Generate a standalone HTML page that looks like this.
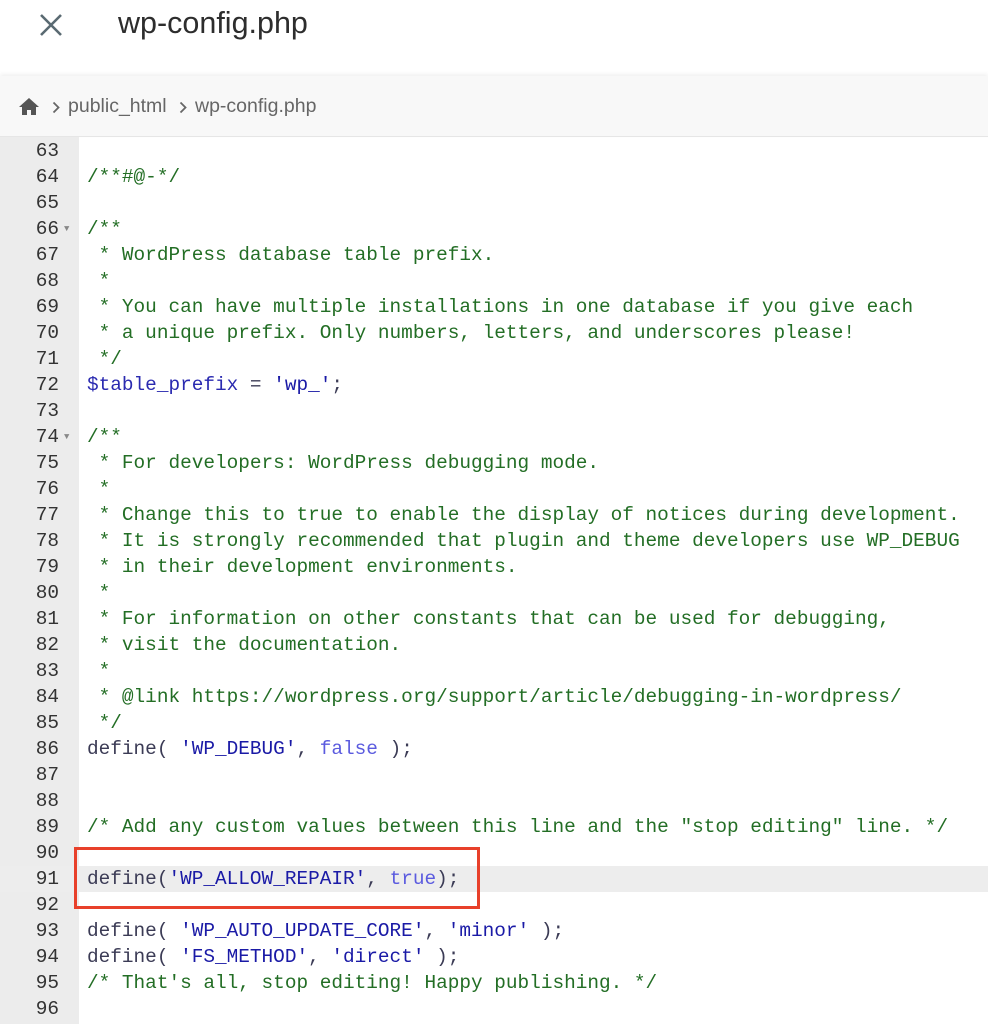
<!DOCTYPE html>
<html><head><meta charset="utf-8"><style>
body{margin:0;width:988px;height:1024px;overflow:hidden;background:#fff;font-family:"Liberation Sans",sans-serif;position:relative}
.hdr{position:absolute;left:0;top:0;width:988px;height:76px;background:#fff}
.x{position:absolute;left:38px;top:12px}
.title{position:absolute;left:118px;top:6px;font-size:30.5px;color:#2d2d2d}
.bc{position:absolute;left:0;top:76px;width:988px;height:60px;background:#f8f8f8;box-shadow:0 -2px 4px rgba(0,0,0,.06);border-bottom:1px solid #e6e6e6}
.bc span{position:absolute;top:19px;font-size:19.5px;color:#666}
.gut{position:absolute;left:0;top:137px;width:79px;height:887px;background:#ececec}
.code{position:absolute;left:0;top:138px;width:988px;font-family:"Liberation Mono",monospace;font-size:19.4px}
.l{height:26px;line-height:26px;position:relative;white-space:pre;color:#3b3b55}
.n{position:absolute;right:929px;width:60px;text-align:right;color:#333}
.t{position:absolute;left:87px}
.hl{background:#ededed}
.c{color:#236e25}.s{color:#1a1aa6}.k{color:#5b5bdf}.v{color:#2a2ab0}
.fold{position:absolute;left:64px;top:0;font-size:9px;color:#888}
.red{position:absolute;left:74px;top:847px;width:400px;height:56px;border:3px solid #e8402a}
</style></head><body>
<div class="hdr">
<svg class="x" width="26" height="26" viewBox="0 0 26 26"><path d="M3 3L23 23M23 3L3 23" stroke="#5a6a72" stroke-width="2.6"/></svg>
<div class="title">wp-config.php</div>
</div>
<div class="bc">
<svg style="position:absolute;left:19px;top:22px" width="20" height="17" viewBox="0 0 20 17"><path d="M10 0L0 9h3v8h5v-5h4v5h5V9h3z" fill="#555"/></svg>
<svg style="position:absolute;left:52px;top:25px" width="8" height="13" viewBox="0 0 8 13"><path d="M1.5 1.5L6.5 6.5L1.5 11.5" stroke="#666" stroke-width="1.8" fill="none"/></svg>
<span style="left:68px">public_html</span>
<svg style="position:absolute;left:179px;top:25px" width="8" height="13" viewBox="0 0 8 13"><path d="M1.5 1.5L6.5 6.5L1.5 11.5" stroke="#666" stroke-width="1.8" fill="none"/></svg>
<span style="left:195px">wp-config.php</span>
</div>
<div class="gut"></div>
<div class="code">
<div class="l"><span class="n">63</span></div>
<div class="l"><span class="n">64</span><span class="t c">/**#@-*/</span></div>
<div class="l"><span class="n">65</span></div>
<div class="l"><span class="n">66</span><span class="fold">▼</span><span class="t c">/**</span></div>
<div class="l"><span class="n">67</span><span class="t c"> * WordPress database table prefix.</span></div>
<div class="l"><span class="n">68</span><span class="t c"> *</span></div>
<div class="l"><span class="n">69</span><span class="t c"> * You can have multiple installations in one database if you give each</span></div>
<div class="l"><span class="n">70</span><span class="t c"> * a unique prefix. Only numbers, letters, and underscores please!</span></div>
<div class="l"><span class="n">71</span><span class="t c"> */</span></div>
<div class="l"><span class="n">72</span><span class="t"><span class="v">$table_prefix</span> = <span class="s">'wp_'</span>;</span></div>
<div class="l"><span class="n">73</span></div>
<div class="l"><span class="n">74</span><span class="fold">▼</span><span class="t c">/**</span></div>
<div class="l"><span class="n">75</span><span class="t c"> * For developers: WordPress debugging mode.</span></div>
<div class="l"><span class="n">76</span><span class="t c"> *</span></div>
<div class="l"><span class="n">77</span><span class="t c"> * Change this to true to enable the display of notices during development.</span></div>
<div class="l"><span class="n">78</span><span class="t c"> * It is strongly recommended that plugin and theme developers use WP_DEBUG</span></div>
<div class="l"><span class="n">79</span><span class="t c"> * in their development environments.</span></div>
<div class="l"><span class="n">80</span><span class="t c"> *</span></div>
<div class="l"><span class="n">81</span><span class="t c"> * For information on other constants that can be used for debugging,</span></div>
<div class="l"><span class="n">82</span><span class="t c"> * visit the documentation.</span></div>
<div class="l"><span class="n">83</span><span class="t c"> *</span></div>
<div class="l"><span class="n">84</span><span class="t c"> * @link https://wordpress.org/support/article/debugging-in-wordpress/</span></div>
<div class="l"><span class="n">85</span><span class="t c"> */</span></div>
<div class="l"><span class="n">86</span><span class="t">define( <span class="s">'WP_DEBUG'</span>, <span class="k">false</span> );</span></div>
<div class="l"><span class="n">87</span></div>
<div class="l"><span class="n">88</span></div>
<div class="l"><span class="n">89</span><span class="t c">/* Add any custom values between this line and the "stop editing" line. */</span></div>
<div class="l"><span class="n">90</span></div>
<div class="l hl"><span class="n">91</span><span class="t">define(<span class="s">'WP_ALLOW_REPAIR'</span>, <span class="k">true</span>);</span></div>
<div class="l"><span class="n">92</span></div>
<div class="l"><span class="n">93</span><span class="t">define( <span class="s">'WP_AUTO_UPDATE_CORE'</span>, <span class="s">'minor'</span> );</span></div>
<div class="l"><span class="n">94</span><span class="t">define( <span class="s">'FS_METHOD'</span>, <span class="s">'direct'</span> );</span></div>
<div class="l"><span class="n">95</span><span class="t c">/* That's all, stop editing! Happy publishing. */</span></div>
<div class="l"><span class="n">96</span></div>
</div>
<div class="red"></div>
</body></html>
